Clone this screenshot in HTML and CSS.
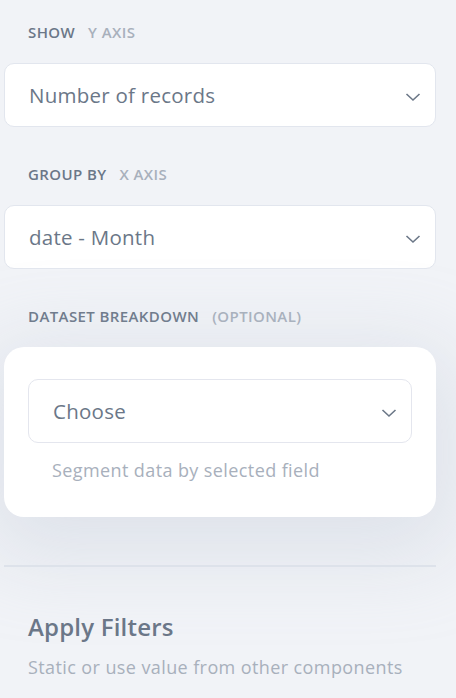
FILE: index.html
```html
<!DOCTYPE html>
<html>
<head>
<meta charset="utf-8">
<link rel="stylesheet" href="styles.css">
</head>
<body>
<div class="panel">
  <div class="label"><span class="main">Show</span><span class="sub">Y Axis</span></div>
  <div class="select">
    <span class="value">Number of records</span>
    <svg class="chev" width="16" height="10" viewBox="0 0 16 10"><path d="M1.5 2 L8 8 L14.5 2" fill="none" stroke="#6b7787" stroke-width="1.6"/></svg>
  </div>

  <div class="label"><span class="main">Group by</span><span class="sub">X Axis</span></div>
  <div class="select">
    <span class="value">date - Month</span>
    <svg class="chev" width="16" height="10" viewBox="0 0 16 10"><path d="M1.5 2 L8 8 L14.5 2" fill="none" stroke="#6b7787" stroke-width="1.6"/></svg>
  </div>

  <div class="label"><span class="main">Dataset breakdown</span><span class="sub">(Optional)</span></div>
  <div class="card">
    <div class="select inner">
      <span class="value">Choose</span>
      <svg class="chev" width="16" height="10" viewBox="0 0 16 10"><path d="M1.5 2 L8 8 L14.5 2" fill="none" stroke="#6b7787" stroke-width="1.6"/></svg>
    </div>
    <div class="help">Segment data by selected field</div>
  </div>

  <hr class="divider">

  <div class="section">
    <h2 class="title">Apply Filters</h2>
    <p class="desc">Static or use value from other components</p>
  </div>
</div>
</body>
</html>
```
FILE: styles.css
```css
* { box-sizing: border-box; }
html, body {
  margin: 0;
  padding: 0;
  background: #f1f3f7;
  font-family: "Open Sans", "Noto Sans", sans-serif;
  overflow: hidden;
}
.panel {
  width: 456px;
  height: 698px;
  padding: 20px 20px 0 4px;
  display: flex;
  flex-direction: column;
}
.label {
  padding-left: 24px;
  font-size: 15px;
  font-weight: 600;
  text-transform: uppercase;
  line-height: 24px;
  display: flex;
  gap: 13px;
  letter-spacing: 0.4px;
}
.label .main { color: #6b7788; }
.label .sub { color: #a8b0bc; }
.select {
  margin-top: 19px;
  height: 64px;
  background: #fff;
  border: 1px solid #e2e6ee;
  border-radius: 10px;
  display: flex;
  align-items: center;
  justify-content: space-between;
  padding: 0 14px 0 24px;
  margin-bottom: 35px;
}
.select .value {
  font-size: 20.5px;
  color: #6b7788;
  letter-spacing: 0.25px;
}
.chev { margin-top: 4px; }
.card {
  margin-top: 19px;
  background: #fff;
  border-radius: 20px;
  padding: 32px 24px 36px 24px;
  box-shadow: 0 20px 80px 20px rgba(190, 198, 212, 0.35);
}
.select.inner {
  margin: 0;
  border-color: #e4e6ee;
  padding-left: 24px;
}
.help {
  margin-top: 16px;
  padding-left: 24px;
  font-size: 18px;
  color: #a8b0bc;
  line-height: 22px;
  letter-spacing: 0.4px;
}
.divider {
  margin: 48px 0 0 0;
  border: none;
  height: 2px;
  background: #dde2ea;
}
.section { padding-left: 24px; }
.title {
  margin: 45px 0 0 0;
  font-size: 24px;
  font-weight: 600;
  color: #6b7788;
  line-height: 30px;
  letter-spacing: 0.2px;
}
.desc {
  margin: 14px 0 0 0;
  font-size: 18px;
  color: #a8b0bc;
  line-height: 22px;
  letter-spacing: 0.4px;
}
```
